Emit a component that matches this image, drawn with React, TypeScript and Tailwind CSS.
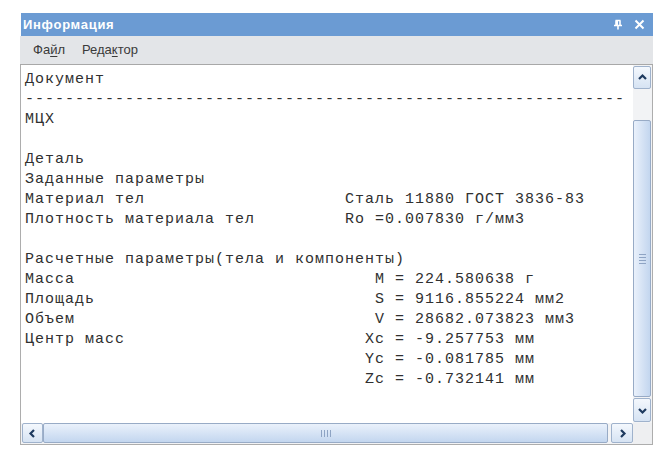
import React from "react";

const mono = { fontFamily: '"Liberation Mono", "Courier New", monospace' };

const pad = (s: string, n: number) => s + " ".repeat(Math.max(0, n - s.length));

const lines = [
  "Документ",
  "-".repeat(60),
  "МЦХ",
  "",
  "Деталь",
  "Заданные параметры",
  pad("Материал тел", 32) + "Сталь 11880 ГОСТ 3836-83",
  pad("Плотность материала тел", 32) + "Ro =0.007830 г/мм3",
  "",
  "Расчетные параметры(тела и компоненты)",
  pad("Масса", 35) + "M = 224.580638 г",
  pad("Площадь", 35) + "S = 9116.855224 мм2",
  pad("Объем", 35) + "V = 28682.073823 мм3",
  pad("Центр масс", 34) + "Xc = -9.257753 мм",
  pad("", 34) + "Yc = -0.081785 мм",
  pad("", 34) + "Zc = -0.732141 мм",
];

function Arrow({ dir }: { dir: "up" | "down" | "left" | "right" }) {
  const d = {
    up: "M2 7 L5.5 3.5 L9 7",
    down: "M2 4 L5.5 7.5 L9 4",
    left: "M7 2 L3.5 5.5 L7 9",
    right: "M4 2 L7.5 5.5 L4 9",
  }[dir];
  return (
    <svg width="11" height="11" viewBox="0 0 11 11">
      <path d={d} fill="none" stroke="#1e3a5f" strokeWidth="2.2" />
    </svg>
  );
}

function ScrollButton({ dir, className }: { dir: "up" | "down" | "left" | "right"; className: string }) {
  return (
    <div
      className={`flex items-center justify-center rounded-[2px] border border-[#9fb2cc] bg-gradient-to-b from-[#f4f8fd] to-[#d6e3f3] ${className}`}
    >
      <Arrow dir={dir} />
    </div>
  );
}

export default function App() {
  return (
    <div className="h-[462px] w-[670px] bg-white pl-[20px] pt-[13px]" style={{ fontFamily: '"Liberation Sans", Arial, sans-serif' }}>
      <div className="flex h-[432px] w-[633px] flex-col">
        {/* title */}
        <div className="ml-px flex h-[23px] items-center justify-between bg-[#6b9bd3] pl-[2px] pr-[8px]">
          <span className="text-[13px] font-bold tracking-[0.7px] text-white">Информация</span>
          <div className="flex items-center gap-[11px]">
            <svg width="10" height="11" viewBox="0 0 10 11">
              <path d="M2.5 1.5 H7.5 M3 1.5 V6 M7 1.5 V6 M1 6.5 H9 M5 6.5 V10.5" fill="none" stroke="white" strokeWidth="1.6" />
              <rect x="3" y="2" width="2" height="4" fill="white" />
            </svg>
            <svg width="11" height="11" viewBox="0 0 11 11">
              <path d="M1.5 1.5 L9.5 9.5 M9.5 1.5 L1.5 9.5" stroke="white" strokeWidth="2" />
            </svg>
          </div>
        </div>

        {/* menu */}
        <div className="flex h-[29px] items-center gap-[17px] border-b border-[#a8a8a8] bg-[#e3e5e8] pl-[13px] text-[13px] text-[#3a3a3a]">
          <span>
            Фа<span className="underline underline-offset-2">й</span>л
          </span>
          <span>
            Реда<span className="underline underline-offset-2">к</span>тор
          </span>
        </div>

        {/* content */}
        <div className="grid flex-1 grid-cols-[1fr_19px] grid-rows-[1fr_21px] border-x border-b border-[#adadad] bg-white">
          <div className="overflow-hidden pl-[4px] pt-[5px]">
            <pre className="whitespace-pre text-[15px] leading-[20px] tracking-[1px] text-[#303030]" style={mono}>
              {lines.join("\n")}
            </pre>
          </div>

          {/* vertical scrollbar */}
          <div className="flex flex-col bg-[#f2f3f5] py-px pr-px">
            <ScrollButton dir="up" className="h-[23px]" />
            <div className="flex flex-1 flex-col pb-[1px] pt-[31px]">
              <div className="flex flex-1 items-center justify-center rounded-[2px] border border-[#98abc6] bg-gradient-to-r from-[#eaf1fb] to-[#c3d6ef]">
                <div className="flex flex-col gap-[2px]">
                  <div className="h-px w-[7px] bg-[#8ea4c4]" />
                  <div className="h-px w-[7px] bg-[#8ea4c4]" />
                  <div className="h-px w-[7px] bg-[#8ea4c4]" />
                  <div className="h-px w-[7px] bg-[#8ea4c4]" />
                </div>
              </div>
            </div>
            <ScrollButton dir="down" className="h-[24px]" />
          </div>

          {/* horizontal scrollbar */}
          <div className="flex bg-[#f2f3f5] pb-px pl-px">
            <ScrollButton dir="left" className="w-[21px]" />
            <div className="flex flex-1 pr-[3px]">
              <div className="flex flex-1 items-center justify-center rounded-[2px] border border-[#98abc6] bg-gradient-to-b from-[#eaf1fb] to-[#c3d6ef]">
                <div className="flex gap-[2px]">
                  <div className="h-[7px] w-px bg-[#8ea4c4]" />
                  <div className="h-[7px] w-px bg-[#8ea4c4]" />
                  <div className="h-[7px] w-px bg-[#8ea4c4]" />
                  <div className="h-[7px] w-px bg-[#8ea4c4]" />
                </div>
              </div>
            </div>
            <ScrollButton dir="right" className="w-[22px]" />
          </div>
          <div className="bg-[#eeeff1]" />
        </div>
      </div>
    </div>
  );
}
